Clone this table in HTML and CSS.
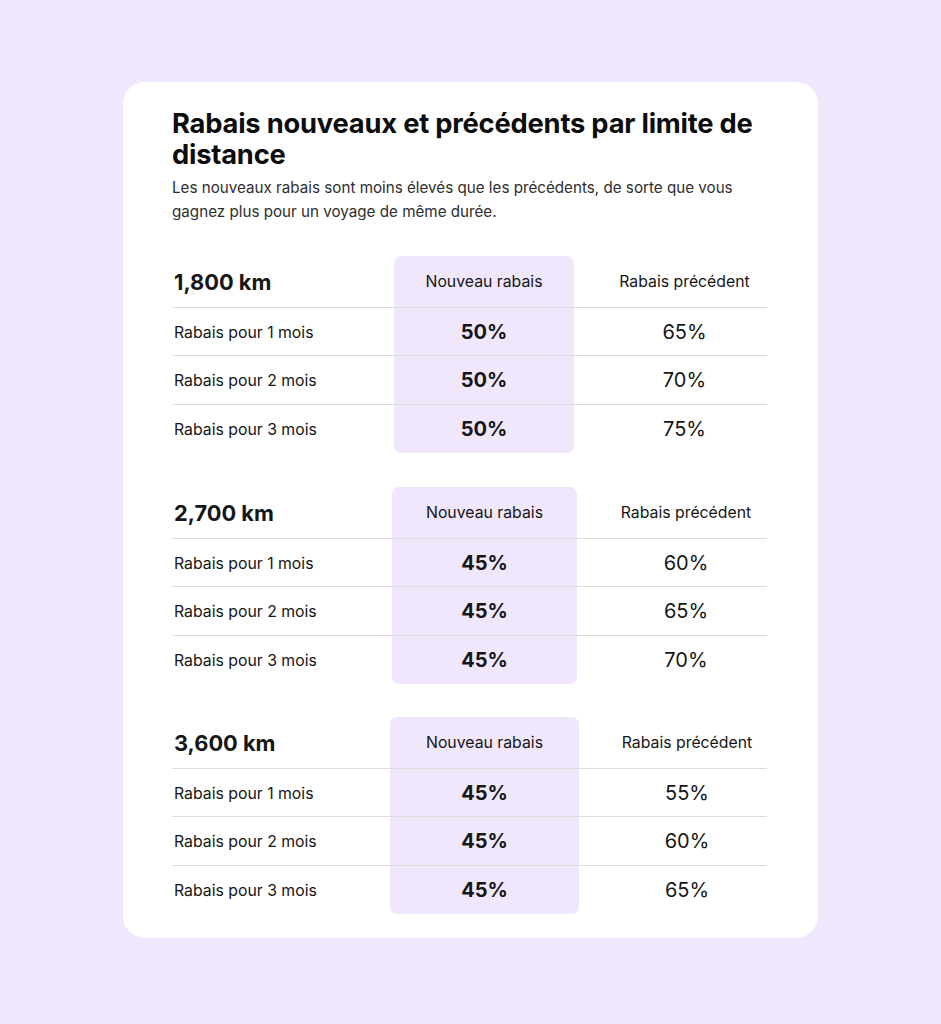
FILE: index.html
```html
<!DOCTYPE html>
<html lang="fr">
<head>
<meta charset="utf-8">
<title>Rabais</title>
<link rel="stylesheet" href="styles.css">
</head>
<body>
<main class="card">
  <h1 class="title">Rabais nouveaux et précédents par limite de distance</h1>
  <p class="intro">Les nouveaux rabais sont moins élevés que les précédents, de sorte que vous gagnez plus pour un voyage de même durée.</p>

  <section class="grid grid--a">
    <div class="hl"></div>
    <div class="cell head km">1,800 km</div>
    <div class="cell head mid">Nouveau rabais</div>
    <div class="cell head right">Rabais précédent</div>
    <div class="cell row label">Rabais pour 1 mois</div>
    <div class="cell row mid val new">50%</div>
    <div class="cell row right val">65%</div>
    <div class="cell row label">Rabais pour 2 mois</div>
    <div class="cell row mid val new">50%</div>
    <div class="cell row right val">70%</div>
    <div class="cell row label">Rabais pour 3 mois</div>
    <div class="cell row mid val new">50%</div>
    <div class="cell row right val">75%</div>
  </section>

  <section class="grid grid--b">
    <div class="hl"></div>
    <div class="cell head km">2,700 km</div>
    <div class="cell head mid">Nouveau rabais</div>
    <div class="cell head right">Rabais précédent</div>
    <div class="cell row label">Rabais pour 1 mois</div>
    <div class="cell row mid val new">45%</div>
    <div class="cell row right val">60%</div>
    <div class="cell row label">Rabais pour 2 mois</div>
    <div class="cell row mid val new">45%</div>
    <div class="cell row right val">65%</div>
    <div class="cell row label">Rabais pour 3 mois</div>
    <div class="cell row mid val new">45%</div>
    <div class="cell row right val">70%</div>
  </section>

  <section class="grid grid--c">
    <div class="hl"></div>
    <div class="cell head km">3,600 km</div>
    <div class="cell head mid">Nouveau rabais</div>
    <div class="cell head right">Rabais précédent</div>
    <div class="cell row label">Rabais pour 1 mois</div>
    <div class="cell row mid val new">45%</div>
    <div class="cell row right val">55%</div>
    <div class="cell row label">Rabais pour 2 mois</div>
    <div class="cell row mid val new">45%</div>
    <div class="cell row right val">60%</div>
    <div class="cell row label">Rabais pour 3 mois</div>
    <div class="cell row mid val new">45%</div>
    <div class="cell row right val">65%</div>
  </section>
</main>
</body>
</html>
```

FILE: styles.css
```css
html, body {
  margin: 0;
  padding: 0;
}
body {
  background: #f0e7fd;
  font-family: Inter, "Noto Sans", sans-serif;
  color: #161616;
  padding: 82px 0 0 123px;
}
.card {
  box-sizing: border-box;
  width: 695px;
  height: 856px;
  background: #ffffff;
  border-radius: 22px;
  padding: 26px 51px 24px 49px;
}
.title {
  margin: 0;
  font-size: 27.3px;
  line-height: 31px;
  font-weight: 700;
  color: #0d0d0d;
  letter-spacing: -0.2px;
}
.intro {
  margin: 6px 0 0;
  font-size: 15.2px;
  line-height: 24px;
  color: #2e2e2e;
}
.grid {
  display: grid;
  grid-template-rows: 51px 48px 49px 49px;
  margin-top: 34px;
}
.grid--a { grid-template-columns: 222px 180px 193px; margin-top: 32px; }
.grid--b { grid-template-columns: 220px 185px 190px; }
.grid--c { grid-template-columns: 218px 189px 188px; margin-top: 33px; }
.hl {
  grid-column: 2;
  grid-row: 1 / 5;
  background: #f0e7fd;
  border-radius: 7px;
}
.cell {
  display: flex;
  align-items: center;
  position: relative;
}
.head { grid-row: 1; }
.row { border-top: 1px solid #dcdcdc; }
.cell:nth-child(3n+2) { grid-column: 1; }
.cell:nth-child(3n+3) { grid-column: 2; }
.cell:nth-child(3n+4) { grid-column: 3; }
.grid .cell:nth-child(n+5):nth-child(-n+7) { grid-row: 2; }
.grid .cell:nth-child(n+8):nth-child(-n+10) { grid-row: 3; }
.grid .cell:nth-child(n+11):nth-child(-n+13) { grid-row: 4; }
.km {
  padding-left: 2px;
  font-size: 21.8px;
  font-weight: 700;
}
.head.mid, .head.right {
  font-size: 15.8px;
  font-weight: 400;
}
.mid { justify-content: center; }
.right { justify-content: center; padding-left: 28px; }
.label {
  padding-left: 2px;
  font-size: 15.8px;
  padding-top: 1px;
}
.val {
  font-size: 20px;
  font-weight: 400;
}
.val.new { font-weight: 700; }
```
